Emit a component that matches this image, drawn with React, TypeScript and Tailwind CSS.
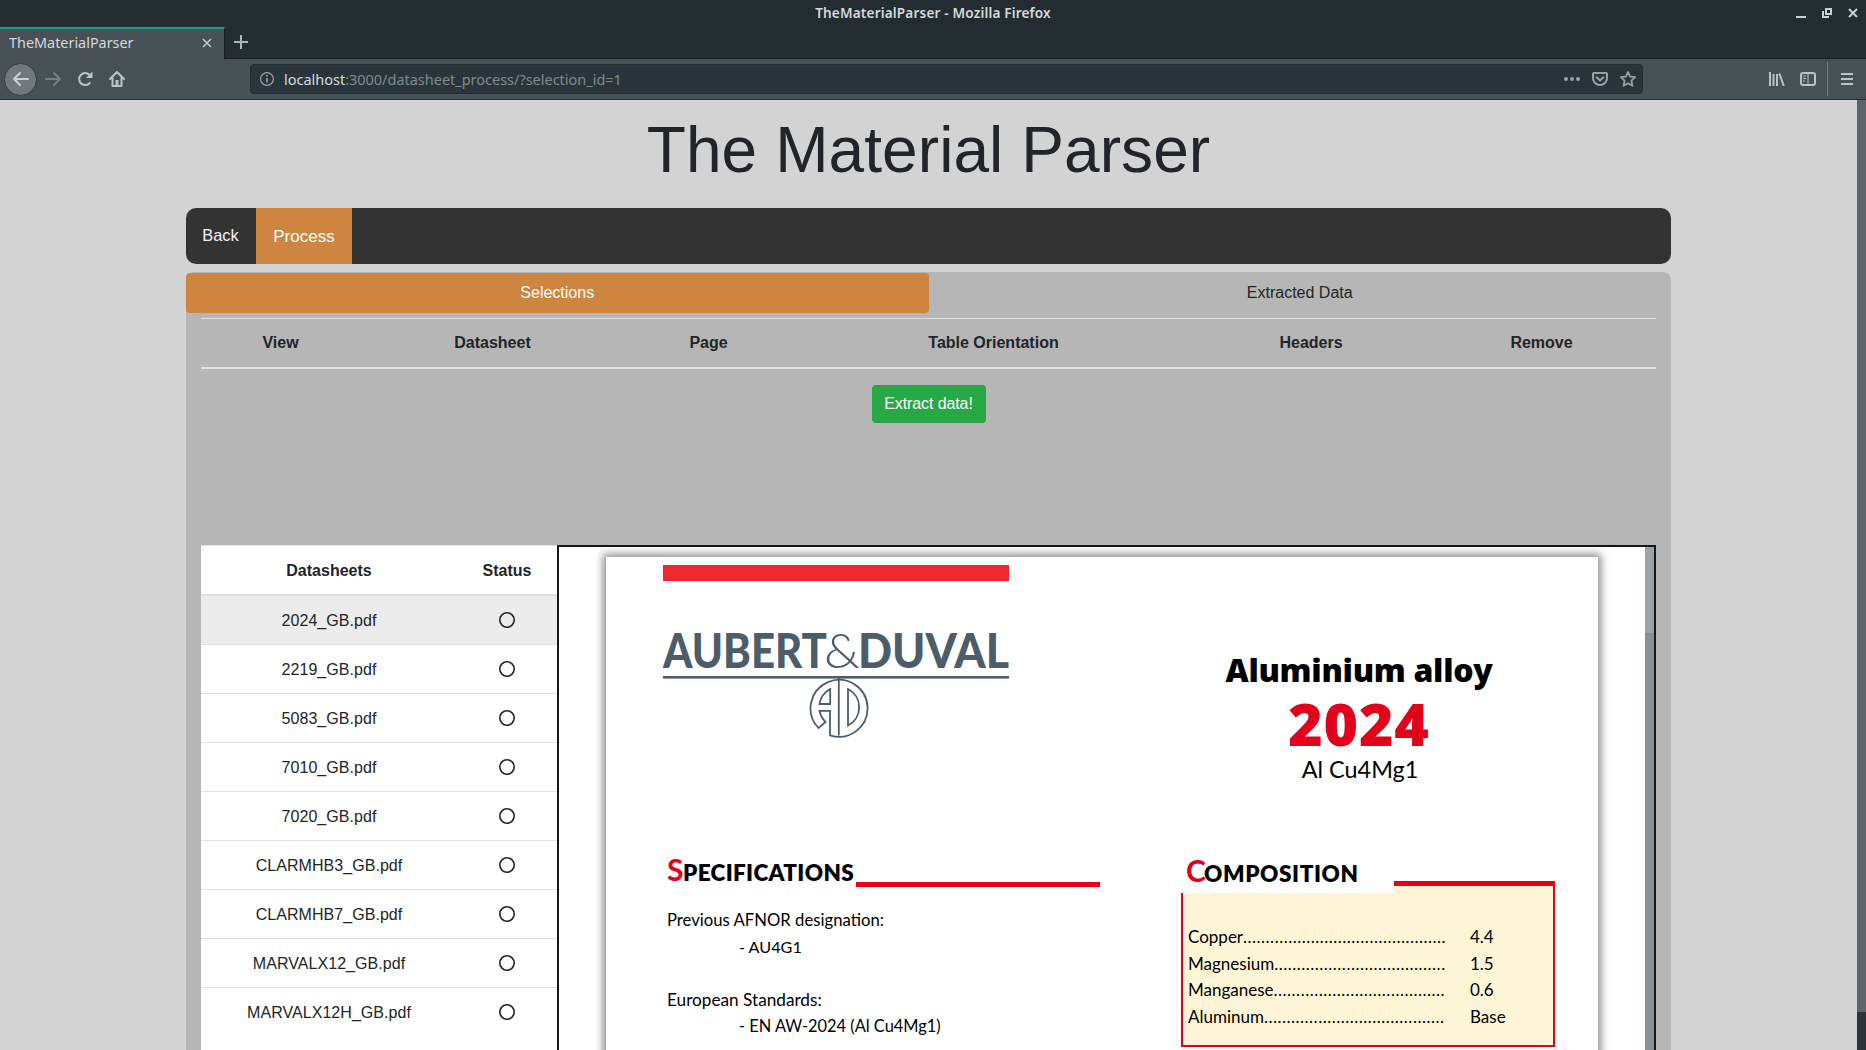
import React from "react";

const datasheets = [
  "2024_GB.pdf",
  "2219_GB.pdf",
  "5083_GB.pdf",
  "7010_GB.pdf",
  "7020_GB.pdf",
  "CLARMHB3_GB.pdf",
  "CLARMHB7_GB.pdf",
  "MARVALX12_GB.pdf",
  "MARVALX12H_GB.pdf",
];

const composition = [
  { name: "Copper", dots: 45, value: "4.4" },
  { name: "Magnesium", dots: 38, value: "1.5" },
  { name: "Manganese", dots: 38, value: "0.6" },
  { name: "Aluminum", dots: 40, value: "Base" },
];

function TitleBar() {
  return (
    <div className="grid h-[27px] grid-cols-[1fr_auto_1fr] items-start">
      <span />
      <span className="mt-[3px] text-[13.6px] leading-5 font-semibold tracking-[0.16px] text-[#d3dadd]">TheMaterialParser - Mozilla Firefox</span>
      <svg className="mt-[6px] mr-[6px] justify-self-end" width="66" height="14" viewBox="0 0 66 14" fill="none" stroke="#c8d1d6" strokeWidth="2">
        <path d="M2 11h10" />
        <path d="M32 3h5v5h-5zM29 5v6h6" />
        <path d="M55 3l8 8M63 3l-8 8" />
      </svg>
    </div>
  );
}

function TabStrip() {
  return (
    <div className="flex h-8 border-b border-[#171f22]">
      <div className="flex h-8 w-[225px] items-center justify-between border-t-2 border-r border-t-[#16a085] border-r-[#171f22] bg-[#475055] pr-3 pb-[2px] pl-[9px]">
        <span className="text-[14.4px] leading-5 text-[#d3dadd]">TheMaterialParser</span>
        <svg width="10" height="10" viewBox="0 0 10 10" stroke="#c3ccd1" strokeWidth="1.5">
          <path d="M1 1l8 8M9 1l-8 8" />
        </svg>
      </div>
      <svg className="mt-2 ml-[9px]" width="14" height="14" viewBox="0 0 14 14" stroke="#aab4b9" strokeWidth="2">
        <path d="M7 0v14M0 7h14" />
      </svg>
    </div>
  );
}

function NavBar() {
  return (
    <div className="flex h-[41px] items-center border-b border-[#232c31] bg-[#475055]">
      <div className="ml-[4px] flex size-[33px] items-center justify-center rounded-full border border-[#353e43] bg-[#72797d]">
        <svg width="18" height="16" viewBox="0 0 18 16" fill="none" stroke="#c8d1d6" strokeWidth="2" strokeLinecap="round" strokeLinejoin="round">
          <path d="M16 8H2M8 2L2 8l6 6" />
        </svg>
      </div>
      <svg className="ml-[7px]" width="18" height="16" viewBox="0 0 18 16" fill="none" stroke="#747e83" strokeWidth="2" strokeLinecap="round" strokeLinejoin="round">
        <path d="M2 8h14M10 2l6 6-6 6" />
      </svg>
      <svg className="ml-[15px]" width="16" height="16" viewBox="0 0 16 16" fill="none" stroke="#b9c3c8" strokeWidth="2">
        <path d="M13.3 11.2A6 6 0 1 1 12.6 4" />
        <path d="M15.5 0.5v6.500h-6.500z" fill="#b9c3c8" stroke="none" />
      </svg>
      <svg className="ml-4" width="16" height="16" viewBox="0 0 16 16" fill="none" stroke="#b9c3c8" strokeWidth="2" strokeLinejoin="round" strokeLinecap="round">
        <path d="M1 8l7-7 7 7M3.500 7v8h9V7" />
        <path d="M8 9v5" strokeWidth="3" strokeLinecap="butt" />
      </svg>
      <div className="ml-[125px] flex h-[30px] w-[1393px] items-center rounded border border-[#232c31] bg-[#2a353b] pr-[6px] pl-[9px]">
        <svg width="14" height="14" viewBox="0 0 14 14" fill="none" stroke="#9aa4a9">
          <circle cx="7" cy="7" r="6.400" strokeWidth="1.200" />
          <path d="M7 6v4.500M7 3v1.600" strokeWidth="1.600" />
        </svg>
        <span className="ml-[10px] flex-1 pt-[2px] text-[14.48px] leading-5 text-[#7f8a8f]">
          <span className="text-[#d3dadd]">localhost</span>:3000/datasheet_process/?selection_id=1
        </span>
        <svg width="16" height="16" viewBox="0 0 16 16" fill="#98a3a8">
          <circle cx="2" cy="8" r="2" />
          <circle cx="8" cy="8" r="2" />
          <circle cx="14" cy="8" r="2" />
        </svg>
        <svg className="ml-3" width="16" height="16" viewBox="0 0 16 16" fill="none" stroke="#98a3a8" strokeWidth="2" strokeLinecap="round" strokeLinejoin="round">
          <path d="M2 2h12a1 1 0 0 1 1 1v4a7 7 0 0 1-14 0V3a1 1 0 0 1 1-1z" />
          <path d="M4.600 6.200L8 9.500l3.400-3.300" />
        </svg>
        <svg className="ml-3" width="16" height="16" viewBox="0 0 16 16" fill="none" stroke="#98a3a8" strokeWidth="1.800" strokeLinejoin="round">
          <path d="M8 1l2.100 4.600 5 .6-3.700 3.400 1 5.200L8 12.300l-4.400 2.500 1-5.200L.9 6.200l5-.6z" />
        </svg>
      </div>
      <svg className="ml-[126px]" width="16" height="16" viewBox="0 0 16 16" fill="none" stroke="#b9c3c8" strokeWidth="2">
        <path d="M1 1v14M4.500 3v12M8 3v12M10.300 2.500l4.500 12.300" />
      </svg>
      <svg className="ml-[15px]" width="16" height="16" viewBox="0 0 16 16" fill="none" stroke="#b9c3c8" strokeWidth="2">
        <rect x="1" y="2" width="14" height="12" rx="2" />
        <path d="M8 2v12M3 5h3M3 7.500h3M3 10h2" strokeWidth="1" />
      </svg>
      <span className="ml-[11px] h-[34px] w-px bg-[#727c81]" />
      <svg className="ml-[13px]" width="12" height="12" viewBox="0 0 12 12" stroke="#b9c3c8" strokeWidth="2">
        <path d="M0 1h12M0 6h12M0 11h12" />
      </svg>
    </div>
  );
}

function DatasheetList() {
  return (
    <div className="w-[356px] bg-white">
      <div className="grid h-[51px] grid-cols-[256px_100px] items-center border-t border-b-2 border-[#dee2e6] pt-px text-center font-bold">
        <span>Datasheets</span>
        <span>Status</span>
      </div>
      <div className="divide-y divide-[#dee2e6]">
        {datasheets.map((name, i) => (
          <div key={name} className={i === 0 ? "bg-[#ececec]" : "bg-white"}>
            <div className="grid h-12 grid-cols-[256px_100px] items-center text-center">
              <span className="pt-[2px] tracking-[0.05px]">{name}</span>
              <svg className="justify-self-center" width="16" height="16" viewBox="0 0 16 16" fill="none" stroke="#212529" strokeWidth="1.600">
                <circle cx="8" cy="8" r="7.200" />
              </svg>
            </div>
          </div>
        ))}
      </div>
    </div>
  );
}

function CompanyLogo() {
  return (
    <svg className="mt-[49px] block" width="346" height="110" viewBox="0 0 346 110" fill="#4c5d69">
      <g fontFamily="Lato" fontSize="48">
        <text x="0" y="37.500" fontWeight="900" textLength="164" lengthAdjust="spacingAndGlyphs">AUBERT</text>
        <text x="161" y="37.500" fontWeight="300" textLength="36" lengthAdjust="spacingAndGlyphs">&amp;</text>
        <text x="195" y="37.500" fontWeight="900" textLength="151" lengthAdjust="spacingAndGlyphs">DUVAL</text>
      </g>
      <rect x="0" y="46" width="346" height="2.600" />
      <g fill="none" stroke="#4c5d69" strokeWidth="1.800">
        <path d="M167 105.300A28.500 28.500 0 1 0 155.500 98l7-6a22 22 0 0 1-6-11.200H167z" />
        <path d="M175.800 48v57.500M167.200 59v15H156.500a21 21 0 0 1 10.700-15z" />
        <path d="M185 59a20.500 20.500 0 0 1 0 36.500z" />
      </g>
    </svg>
  );
}

function PdfPage() {
  return (
    <div className="ml-[47px] mt-[10px] flex h-[1400px] w-[992px] shrink-0 bg-white font-[Lato,sans-serif] text-black shadow-[0_0_8px_3px_rgba(0,0,0,0.45)]">
      <div className="ml-[57px] w-[437px]">
        <div className="mt-2 h-4 w-[346px] bg-[#f0282d]" />
        <CompanyLogo />
        <div className="mt-[112px] ml-[4px] flex h-9 items-start">
          <h2 className="text-[30px] leading-[34px] font-bold whitespace-nowrap">
            <span className="inline-block w-4 text-[#e2001a]">S</span>
            <span className="text-[22.5px] leading-none font-extrabold tracking-[0.35px]">PECIFICATIONS</span>
          </h2>
          <div className="mt-[30px] ml-auto h-[5px] w-[244px] bg-[#e2001a]" />
        </div>
        <div className="mt-[19px] ml-[4px] text-[16.7px] leading-[26.5px]">
          <p>Previous AFNOR designation:</p>
          <p className="pl-[72px] text-[16.2px]">- AU4G1</p>
          <p className="mt-[26.500px] text-[17.2px]">European Standards:</p>
          <p className="pl-[72px] text-[16.4px]">- EN AW-2024 (Al Cu4Mg1)</p>
        </div>
      </div>
      <div className="ml-[81px] w-[374px] pt-[93px]">
        <div className="pr-[18px] text-center">
          <p className="font-['Open_Sans',sans-serif] text-[32px] leading-10 font-extrabold tracking-[-0.3px]">Aluminium alloy</p>
          <p className="mt-[3px] font-['Open_Sans',sans-serif] text-[59px] leading-[60px] font-extrabold tracking-[0.8px] text-[#e2001a]">2024</p>
          <p className="mt-[1px] pl-[2px] text-[23.4px] leading-[30px]">Al Cu4Mg1</p>
        </div>
        <h2 className="relative mt-[69px] h-10 w-[213px] bg-white pl-[5px] text-[30px] leading-[35px] font-bold whitespace-nowrap">
          <span className="inline-block w-[18px] text-[#e2001a]">C</span>
          <span className="text-[22.5px] leading-none font-extrabold tracking-[0.6px]">OMPOSITION</span>
        </h2>
        <div className="-mt-3 h-[166px] border-2 border-t-[5px] border-[#e2001a] bg-[#fef4d6] pt-[38px] pl-[5px] text-[17px] leading-[26.700px]">
          {composition.map((row) => (
            <div key={row.name} className="flex">
              <span className="flex w-[282px] overflow-hidden whitespace-nowrap">
                {row.name}
                <span className="tracking-[0.500px]">{".".repeat(row.dots)}</span>
              </span>
              <span>{row.value}</span>
            </div>
          ))}
        </div>
      </div>
    </div>
  );
}

export default function App() {
  return (
    <div className="flex h-[1050px] flex-col overflow-hidden bg-[#232c31] font-['Noto_Sans',sans-serif]">
      <TitleBar />
      <TabStrip />
      <NavBar />
      <div className="flex min-h-0 flex-1 font-['Liberation_Sans',sans-serif] text-base text-[#212529]">
        <main className="flex w-[1857px] flex-col items-center bg-[#d3d3d3]">
          <h1 className="mt-3 text-[64px] leading-[77px] tracking-[0.08px]">The Material Parser</h1>
          <nav className="mt-[19px] flex h-14 w-[1485px] shrink-0 overflow-hidden rounded-[10px] bg-[#333] text-[#f2f2f2]">
            <a className="w-[70px] pt-[14px] pr-px text-center text-[16.400px] leading-[26px]">Back</a>
            <a className="w-24 bg-[#cd853f] pt-4 text-center text-[17px] leading-[26px] text-white">Process</a>
          </nav>
          <section className="mt-2 flex min-h-0 w-[1485px] flex-1 flex-col rounded-t-lg bg-[#b6b6b6] pt-px">
            <div className="grid h-10 grid-cols-2 text-center leading-10">
              <div className="rounded bg-[#cd853f] text-white">Selections</div>
              <div>Extracted Data</div>
            </div>
            <div className="mx-[15px] mt-[5px] grid h-[51px] grid-cols-[159px_265px_167px_403px_232px_229px] items-center border-t border-b-2 border-[#dee2e6] text-center font-bold">
              <span>View</span>
              <span>Datasheet</span>
              <span>Page</span>
              <span>Table Orientation</span>
              <span>Headers</span>
              <span>Remove</span>
            </div>
            <button className="mt-4 h-[38px] w-[114px] self-center rounded bg-[#28a745] tracking-[-0.1px] text-white">Extract data!</button>
            <div className="mx-[15px] mt-[122px] flex min-h-0 flex-1">
              <DatasheetList />
              <div className="flex min-w-0 flex-1 overflow-hidden border-x-2 border-t-2 border-[#15171a] bg-white">
                <PdfPage />
                <div className="ml-auto flex w-[9px] flex-col bg-[#879094]">
                  <div className="h-[86px] bg-[#9aa4a8]" />
                </div>
              </div>
            </div>
          </section>
        </main>
        <div className="flex flex-1 flex-col justify-end bg-[#5a666c]">
          <div className="h-[38px] bg-[#2a353b]" />
        </div>
      </div>
    </div>
  );
}
